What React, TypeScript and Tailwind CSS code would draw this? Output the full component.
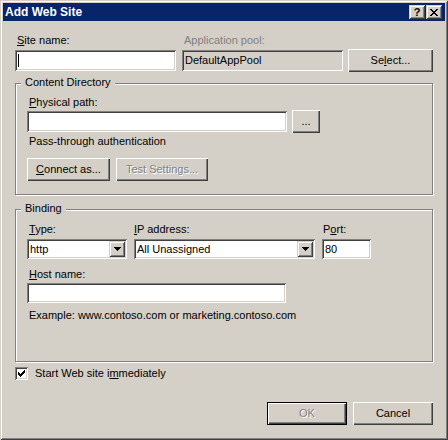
import React from 'react';

// classic 3D edges
const raised =
  'shadow-[inset_1px_1px_0_#fff,inset_-1px_-1px_0_#404040,inset_-2px_-2px_0_#808080]';
const raisedSmall =
  'shadow-[inset_1px_1px_0_#d4d0c8,inset_-1px_-1px_0_#404040,inset_2px_2px_0_#fff,inset_-2px_-2px_0_#808080]';
const sunken =
  'shadow-[inset_1px_1px_0_#808080,inset_-1px_-1px_0_#fff,inset_2px_2px_0_#404040,inset_-2px_-2px_0_#d4d0c8]';
const etched = 'border border-[#808080] shadow-[1px_1px_0_#fff,inset_1px_1px_0_#fff]';
const disabledText = 'text-[#808080] [text-shadow:1px_1px_0_#fff]';

const U = ({ children }: { children: React.ReactNode }) => (
  <span className="underline decoration-1 underline-offset-[1px]">{children}</span>
);

type ButtonProps = {
  children: React.ReactNode;
  className?: string;
  disabled?: boolean;
  isDefault?: boolean;
};

const Button = ({ children, className = '', disabled, isDefault }: ButtonProps) => (
  <div
    className={`flex h-[23px] items-center justify-center bg-[#d4d0c8] leading-[13px] ${raised} ${
      isDefault ? 'border border-black' : ''
    } ${disabled ? disabledText : 'text-black'} ${className}`}
  >
    {children}
  </div>
);

const Label = ({ children, className = '' }: { children: React.ReactNode; className?: string }) => (
  <div className={`h-[13px] pl-[2px] leading-[13px] ${className}`}>{children}</div>
);

const Triangle = () => (
  <svg width="7" height="4" viewBox="0 0 7 4" shapeRendering="crispEdges">
    <path d="M0 0h7v1h-7z M1 1h5v1h-5z M2 2h3v1h-3z M3 3h1v1h-1z" fill="#000" />
  </svg>
);

const Combo = ({ value, className = '' }: { value: string; className?: string }) => (
  <div className={`flex h-[20px] items-center bg-white pl-[3px] pr-[2px] ${sunken} ${className}`}>
    <span className="flex-1 leading-[13px]">{value}</span>
    <div className={`flex h-[16px] w-[16px] items-center justify-center bg-[#d4d0c8] ${raisedSmall}`}>
      <Triangle />
    </div>
  </div>
);

const Group = ({
  title,
  className = '',
  children,
}: {
  title: string;
  className?: string;
  children: React.ReactNode;
}) => (
  <div className={`relative ${etched} ${className}`}>
    <span className="absolute left-[5px] top-[-8px] bg-[#d4d0c8] px-[4px] leading-[13px]">{title}</span>
    {children}
  </div>
);

const CheckMark = () => (
  <svg width="7" height="7" viewBox="0 0 7 7" shapeRendering="crispEdges">
    <path
      d="M6 0h1v1h-1z M5 1h2v1h-2z M0 2h1v1h-1z M4 2h3v1h-3z M0 3h2v1h-2z M3 3h3v1h-3z M0 4h5v1h-5z M1 5h3v1h-3z M2 6h1v1h-1z"
      fill="#000"
    />
  </svg>
);

const CloseGlyph = () => (
  <svg width="8" height="7" viewBox="0 0 8 7" shapeRendering="crispEdges">
    <path
      d="M0 0h2v1h-2z M6 0h2v1h-2z M1 1h2v1h-2z M5 1h2v1h-2z M2 2h4v1h-4z M3 3h2v1h-2z M2 4h4v1h-4z M1 5h2v1h-2z M5 5h2v1h-2z M0 6h2v1h-2z M6 6h2v1h-2z"
      fill="#000"
    />
  </svg>
);

const App = () => {
  return (
    <div
      className="flex h-[440px] w-[448px] flex-col bg-[#d4d0c8] p-[3px] font-['Liberation_Sans',Arial,sans-serif] text-[11px] text-black shadow-[inset_1px_1px_0_#d4d0c8,inset_-1px_-1px_0_#404040,inset_2px_2px_0_#fff,inset_-2px_-2px_0_#808080]"
    >
      {/* title bar */}
      <div className="flex h-[18px] items-center bg-[#0a246a] pl-[2px] pr-[3px]">
        <span className="flex-1 text-[12px] font-bold leading-[14px] text-white">Add Web Site</span>
        <div className="flex gap-[1px]">
          <div
            className={`flex h-[14px] w-[16px] items-center justify-center bg-[#d4d0c8] text-[11px] font-bold leading-[11px] ${raisedSmall}`}
          >
            ?
          </div>
          <div className={`flex h-[14px] w-[16px] items-center justify-center bg-[#d4d0c8] ${raisedSmall}`}>
            <CloseGlyph />
          </div>
        </div>
      </div>

      <div className="flex flex-1 flex-col px-[12px]">
        {/* site name / app pool */}
        <div className="mt-[13px] flex items-end">
          <div className="flex w-[161px] flex-col">
            <Label>
              <U>S</U>ite name:
            </Label>
            <div className={`mt-[3px] flex h-[21px] items-center bg-white pl-[3px] ${sunken}`}>
              <div className="h-[13px] w-[1px] bg-black" />
            </div>
          </div>
          <div className="ml-[6px] flex w-[161px] flex-col">
            <Label className="text-[#808080]">Application pool:</Label>
            <div className={`mt-[3px] flex h-[21px] items-center bg-[#d4d0c8] pl-[3px] ${sunken}`}>
              DefaultAppPool
            </div>
          </div>
          <Button className="mb-[-1px] ml-[5px] w-[85px]">
            Se<U>l</U>ect...
          </Button>
        </div>

        {/* content directory */}
        <Group title="Content Directory" className="mt-[12px] h-[112px] w-[418px]">
          <div className="flex flex-col px-[11px] pt-[12px]">
            <Label>
              <U>P</U>hysical path:
            </Label>
            <div className="mt-[1px] flex items-center">
              <div className={`h-[21px] w-[260px] bg-white ${sunken}`} />
              <Button className="ml-[5px] w-[28px]">...</Button>
            </div>
            <Label className="mt-[2px]">Pass-through authentication</Label>
            <div className="mt-[10px] flex gap-[6px]">
              <Button className="w-[83px]">
                <U>C</U>onnect as...
              </Button>
              <Button className="w-[92px]" disabled>
                Test Settin<U>g</U>s...
              </Button>
            </div>
          </div>
        </Group>

        {/* binding */}
        <Group title="Binding" className="mt-[14px] h-[153px] w-[418px]">
          <div className="flex flex-col px-[11px] pt-[13px]">
            <div className="flex gap-[7px]">
              <div className="flex w-[100px] flex-col">
                <Label>
                  <U>T</U>ype:
                </Label>
                <Combo value="http" className="mt-[3px]" />
              </div>
              <div className="flex w-[181px] flex-col">
                <Label className="!pl-0">
                  <U>I</U>P address:
                </Label>
                <Combo value="All Unassigned" className="mt-[3px]" />
              </div>
              <div className="flex w-[49px] flex-col">
                <Label className="!pl-[1px]">
                  P<U>o</U>rt:
                </Label>
                <div className={`mt-[3px] flex h-[20px] items-center bg-white pl-[3px] leading-[13px] ${sunken}`}>
                  80
                </div>
              </div>
            </div>
            <Label className="mt-[9px]">
              <U>H</U>ost name:
            </Label>
            <div className={`mt-[2px] h-[20px] w-[259px] bg-white ${sunken}`} />
            <Label className="mt-[6px]">Example: www.contoso.com or marketing.contoso.com</Label>
          </div>
        </Group>

        {/* start immediately */}
        <div className="mt-[5px] flex items-center">
          <div className={`flex h-[13px] w-[13px] items-center justify-center bg-white ${sunken}`}>
            <CheckMark />
          </div>
          <span className="ml-[7px] leading-[13px]">
            Start Web site i<U>m</U>mediately
          </span>
        </div>

        {/* dialog buttons */}
        <div className="mt-[22px] flex justify-end gap-[6px]">
          <Button className="w-[80px]" disabled isDefault>
            OK
          </Button>
          <Button className="w-[80px]">Cancel</Button>
        </div>
      </div>
    </div>
  );
};

export default App;
